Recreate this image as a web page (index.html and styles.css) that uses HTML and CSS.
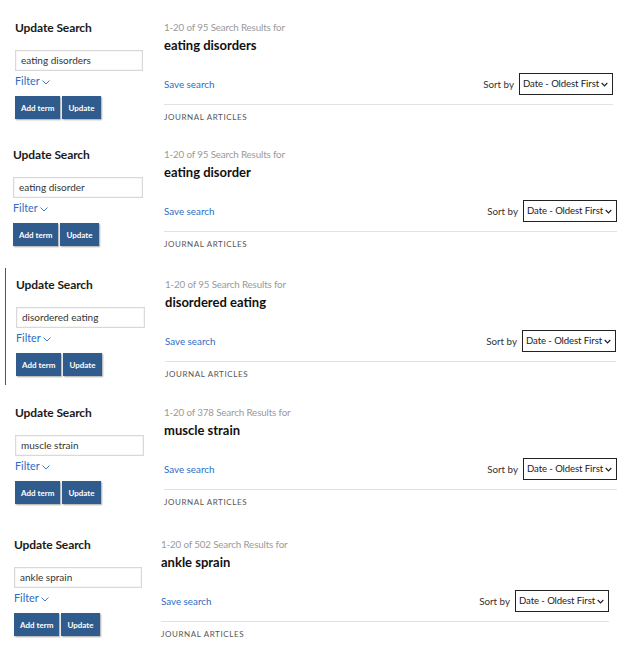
FILE: index.html
```html
<!DOCTYPE html>
<html lang="en">
<head>
<meta charset="utf-8">
<title>Search results</title>
<link rel="stylesheet" href="styles.css">
</head>
<body>
<section class="panel p1">
  <aside class="side">
    <h2 class="side-title">Update Search</h2>
    <div class="term">eating disorders</div>
    <a class="filter" href="#">Filter <svg class="chev" viewBox="0 0 8 5" width="8" height="5"><path d="M0.5 0.5 L4 4 L7.5 0.5" fill="none" stroke="currentColor" stroke-width="0.9"/></svg></a>
    <div class="btns"><button class="btn">Add term</button><button class="btn">Update</button></div>
  </aside>
  <div class="results">
    <p class="count">1-20 of 95 Search Results for</p>
    <h1 class="query">eating disorders</h1>
    <div class="toolbar">
      <a class="save" href="#">Save search</a>
      <label class="sort">Sort by <span class="select"><span class="sel-text">Date - Oldest First</span><svg class="sel-chev" viewBox="0 0 8 5" width="7" height="5"><path d="M0.8 0.8 L4 4 L7.2 0.8" fill="none" stroke="#222" stroke-width="1.4"/></svg></span></label>
    </div>
    <hr class="rule">
    <p class="section">Journal Articles</p>
  </div>
</section>
<section class="panel p2">
  <aside class="side">
    <h2 class="side-title">Update Search</h2>
    <div class="term">eating disorder</div>
    <a class="filter" href="#">Filter <svg class="chev" viewBox="0 0 8 5" width="8" height="5"><path d="M0.5 0.5 L4 4 L7.5 0.5" fill="none" stroke="currentColor" stroke-width="0.9"/></svg></a>
    <div class="btns"><button class="btn">Add term</button><button class="btn">Update</button></div>
  </aside>
  <div class="results">
    <p class="count">1-20 of 95 Search Results for</p>
    <h1 class="query">eating disorder</h1>
    <div class="toolbar">
      <a class="save" href="#">Save search</a>
      <label class="sort">Sort by <span class="select"><span class="sel-text">Date - Oldest First</span><svg class="sel-chev" viewBox="0 0 8 5" width="7" height="5"><path d="M0.8 0.8 L4 4 L7.2 0.8" fill="none" stroke="#222" stroke-width="1.4"/></svg></span></label>
    </div>
    <hr class="rule">
    <p class="section">Journal Articles</p>
  </div>
</section>
<section class="panel p3">
  <aside class="side">
    <h2 class="side-title">Update Search</h2>
    <div class="term">disordered eating</div>
    <a class="filter" href="#">Filter <svg class="chev" viewBox="0 0 8 5" width="8" height="5"><path d="M0.5 0.5 L4 4 L7.5 0.5" fill="none" stroke="currentColor" stroke-width="0.9"/></svg></a>
    <div class="btns"><button class="btn">Add term</button><button class="btn">Update</button></div>
  </aside>
  <div class="results">
    <p class="count">1-20 of 95 Search Results for</p>
    <h1 class="query">disordered eating</h1>
    <div class="toolbar">
      <a class="save" href="#">Save search</a>
      <label class="sort">Sort by <span class="select"><span class="sel-text">Date - Oldest First</span><svg class="sel-chev" viewBox="0 0 8 5" width="7" height="5"><path d="M0.8 0.8 L4 4 L7.2 0.8" fill="none" stroke="#222" stroke-width="1.4"/></svg></span></label>
    </div>
    <hr class="rule">
    <p class="section">Journal Articles</p>
  </div>
</section>
<section class="panel p4">
  <aside class="side">
    <h2 class="side-title">Update Search</h2>
    <div class="term">muscle strain</div>
    <a class="filter" href="#">Filter <svg class="chev" viewBox="0 0 8 5" width="8" height="5"><path d="M0.5 0.5 L4 4 L7.5 0.5" fill="none" stroke="currentColor" stroke-width="0.9"/></svg></a>
    <div class="btns"><button class="btn">Add term</button><button class="btn">Update</button></div>
  </aside>
  <div class="results">
    <p class="count">1-20 of 378 Search Results for</p>
    <h1 class="query">muscle strain</h1>
    <div class="toolbar">
      <a class="save" href="#">Save search</a>
      <label class="sort">Sort by <span class="select"><span class="sel-text">Date - Oldest First</span><svg class="sel-chev" viewBox="0 0 8 5" width="7" height="5"><path d="M0.8 0.8 L4 4 L7.2 0.8" fill="none" stroke="#222" stroke-width="1.4"/></svg></span></label>
    </div>
    <hr class="rule">
    <p class="section">Journal Articles</p>
  </div>
</section>
<section class="panel p5">
  <aside class="side">
    <h2 class="side-title">Update Search</h2>
    <div class="term">ankle sprain</div>
    <a class="filter" href="#">Filter <svg class="chev" viewBox="0 0 8 5" width="8" height="5"><path d="M0.5 0.5 L4 4 L7.5 0.5" fill="none" stroke="currentColor" stroke-width="0.9"/></svg></a>
    <div class="btns"><button class="btn">Add term</button><button class="btn">Update</button></div>
  </aside>
  <div class="results">
    <p class="count">1-20 of 502 Search Results for</p>
    <h1 class="query">ankle sprain</h1>
    <div class="toolbar">
      <a class="save" href="#">Save search</a>
      <label class="sort">Sort by <span class="select"><span class="sel-text">Date - Oldest First</span><svg class="sel-chev" viewBox="0 0 8 5" width="7" height="5"><path d="M0.8 0.8 L4 4 L7.2 0.8" fill="none" stroke="#222" stroke-width="1.4"/></svg></span></label>
    </div>
    <hr class="rule">
    <p class="section">Journal Articles</p>
  </div>
</section>
</body>
</html>
```
FILE: styles.css
```css
* { box-sizing: border-box; }
html, body { margin: 0; padding: 0; background: #fff; }
body {
  font-family: "Lato", "Liberation Sans", sans-serif;
  color: #222;
  width: 639px;
  height: 653px;
  overflow: hidden;
}

.panel {
  --pl: 15px;
  --col: 164px;
  --end: 613px;
  --iw: 128px;
  position: relative;
  display: grid;
  grid-template-columns: calc(var(--col) - var(--pl)) 1fr;
  padding: 20px calc(639px - var(--end)) 0 var(--pl);
  height: 128px;
}
.p1 { height: 127px; }
.p2 { --pl: 13px; --col: 164px; --end: 617px; --iw: 130px; height: 130px; }
.p3 { --pl: 16px; --col: 165px; --end: 616px; --iw: 129px; height: 128px; }
.p4 { --pl: 15px; --col: 164px; --end: 617px; --iw: 129px; height: 132px; }
.p5 { --pl: 14px; --col: 161px; --end: 609px; --iw: 128px; height: 136px; }

.p3::before {
  content: "";
  position: absolute;
  left: 5px;
  top: 11px;
  height: 117px;
  width: 1px;
  background: #555;
}

.side { display: flex; flex-direction: column; align-items: flex-start; }
.side-title {
  margin: 0;
  font-size: 12px;
  line-height: 15px;
  font-weight: 700;
  color: #1a1a1a;
  letter-spacing: -0.1px;
}
.term {
  margin-top: 15px;
  width: var(--iw);
  height: 21px;
  border: 1px solid #d9d9d9;
  box-shadow: inset 0 0 0 0.5px #eee;
  font-size: 10px;
  line-height: 19px;
  padding: 0 5px;
  color: #333;
}
.filter {
  margin-top: 3px;
  font-size: 10.8px;
  line-height: 14px;
  color: #2c6cc4;
  text-decoration: none;
  display: inline-flex;
  align-items: center;
  gap: 2px;
}
.chev { margin-top: 2px; }
.btns { margin-top: 8px; display: flex; gap: 2px; }
.btn {
  font-family: inherit;
  height: 23px;
  border: 0;
  background: #2f5b8d;
  color: #fff;
  font-weight: 700;
  font-size: 8px;
  padding: 0 6px;
  box-shadow: 1px 1px 1.5px rgba(0,0,0,0.35);
  border-radius: 0;
}

.results { display: flex; flex-direction: column; }
.count { margin: 0; font-size: 9.8px; line-height: 15px; color: #9a9a9a; letter-spacing: -0.15px; }
.query { margin: 0; font-size: 13px; line-height: 20px; font-weight: 700; color: #111; }
.toolbar {
  margin-top: 18px;
  height: 22px;
  display: flex;
  align-items: center;
  justify-content: space-between;
}
.save { font-size: 9.8px; color: #2c6cc4; text-decoration: none; }
.sort { font-size: 9.8px; color: #333; display: flex; align-items: center; gap: 5px; }
.select {
  position: relative;
  width: 94px;
  height: 22px;
  border: 1px solid #222;
  font-size: 9.6px;
  line-height: 20px;
  padding-left: 3px;
  color: #222;
  display: block;
  overflow: hidden;
  white-space: nowrap;
}
.sel-text { letter-spacing: -0.1px; }
.sel-chev { position: absolute; right: 4px; top: 8px; }
.rule { margin: 9px 0 0; border: 0; border-top: 1px solid #e2e2e2; height: 0; }
.section {
  margin: 6px 0 0;
  font-size: 8px;
  line-height: 12px;
  letter-spacing: 0.6px;
  text-transform: uppercase;
  color: #555;
}
```
